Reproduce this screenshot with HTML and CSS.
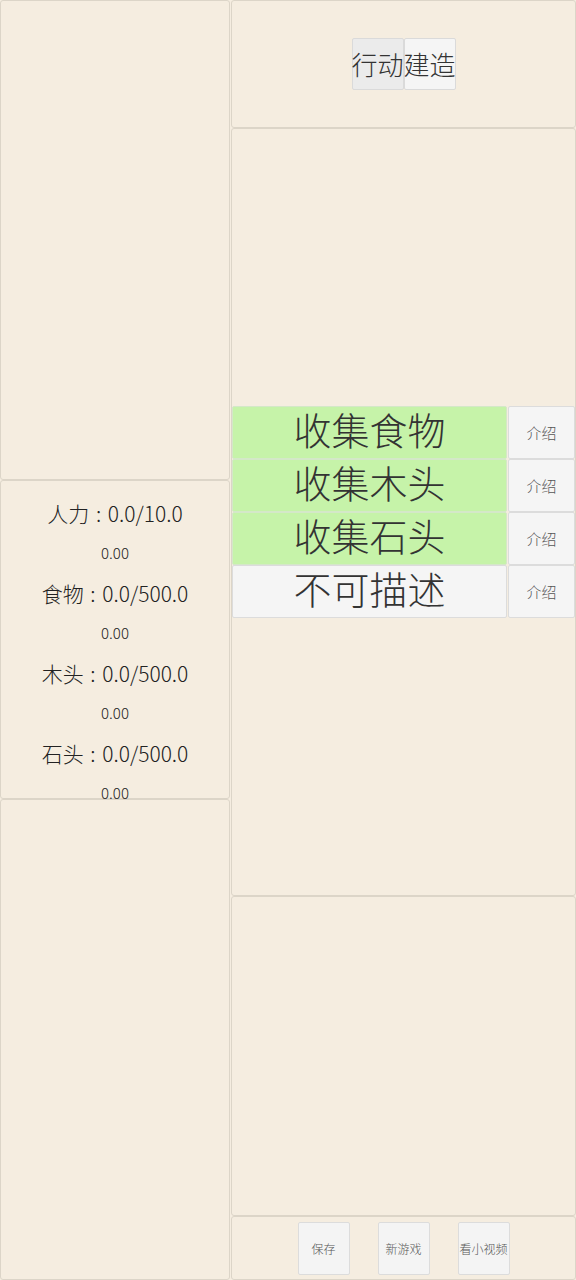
FILE: index.html
```html
<!DOCTYPE html>
<html lang="zh">
<head>
<meta charset="utf-8">
<link rel="stylesheet" href="styles.css">
</head>
<body>
<div class="app">
  <div class="left">
    <div class="panel p-top"></div>
    <div class="panel p-stats">
      <div class="stat">人力 : 0.0/10.0</div>
      <div class="rate">0.00</div>
      <div class="stat">食物 : 0.0/500.0</div>
      <div class="rate">0.00</div>
      <div class="stat">木头 : 0.0/500.0</div>
      <div class="rate">0.00</div>
      <div class="stat">石头 : 0.0/500.0</div>
      <div class="rate">0.00</div>
    </div>
    <div class="panel p-bottom"></div>
  </div>
  <div class="right">
    <div class="panel p-tabs">
      <button class="tab active">行动</button><button class="tab">建造</button>
    </div>
    <div class="panel p-actions">
      <div class="row"><button class="act on">收集食物</button><button class="info">介绍</button></div>
      <div class="row"><button class="act on">收集木头</button><button class="info">介绍</button></div>
      <div class="row"><button class="act on">收集石头</button><button class="info">介绍</button></div>
      <div class="row"><button class="act">不可描述</button><button class="info">介绍</button></div>
    </div>
    <div class="panel p-log"></div>
    <div class="panel p-menu">
      <button class="menu">保存</button>
      <button class="menu">新游戏</button>
      <button class="menu">看小视频</button>
    </div>
  </div>
</div>
</body>
</html>
```
FILE: styles.css
```css
* { box-sizing: border-box; }
html, body { margin: 0; padding: 0; background: #f5ede0; }
body {
  font-family: "Noto Sans CJK SC", "Noto Sans", sans-serif;
  font-weight: 300;
  color: #222;
}
.app { display: flex; width: 576px; height: 1280px; }
.left { width: 230px; display: flex; flex-direction: column; }
.right { flex: 1; display: flex; flex-direction: column; margin-left: 1px; }
.panel {
  background: #f5ede0;
  border: 1px solid #dcd5c8;
  border-radius: 3px;
}
.p-top { height: 480px; }
.p-stats {
  height: 319px;
  padding-top: 12px;
  text-align: center;
  overflow: visible;
}
.p-bottom { flex: 1; }
.stat { font-size: 21px; line-height: 40px; height: 40px; white-space: nowrap; word-spacing: 2px; }
.rate { font-size: 15px; line-height: 40px; height: 40px; }
.p-tabs {
  height: 128px;
  display: flex;
  justify-content: center;
  align-items: center;
}
button {
  font-family: inherit;
  font-weight: 300;
  margin: 0;
  padding: 0;
  cursor: pointer;
  white-space: nowrap;
  overflow: visible;
}
.tab {
  width: 52px;
  height: 52px;
  font-size: 26px;
  line-height: 50px;
  color: #333;
  background: #f5f5f5;
  border: 1px solid #dadada;
  border-radius: 2px;
  display: flex;
  justify-content: center;
  align-items: center;
}
.tab.active { background: #ebebeb; }
.p-actions {
  height: 768px;
  display: flex;
  flex-direction: column;
  justify-content: center;
}
.row { display: flex; height: 53px; }
.act {
  width: 275px;
  height: 53px;
  font-size: 38px;
  line-height: 44px;
  padding-bottom: 8px;
  color: #333;
  background: #f5f5f5;
  border: 1px solid #dcdcdc;
  border-radius: 2px;
}
.act.on { background: #c6f3a9; border-color: #d4e8c8; }
.info {
  flex: 1;
  height: 53px;
  font-size: 15px;
  color: #555;
  background: #f5f5f5;
  border: 1px solid #dcdcdc;
  border-radius: 2px;
  margin-left: 1px;
}
.p-log { height: 320px; }
.p-menu {
  flex: 1;
  display: flex;
  justify-content: center;
  align-items: center;
  gap: 28px;
}
.menu {
  width: 52px;
  height: 53px;
  font-size: 12px;
  color: #555;
  background: #f4f4f4;
  border: 1px solid #dcdcdc;
  border-radius: 2px;
}
```
